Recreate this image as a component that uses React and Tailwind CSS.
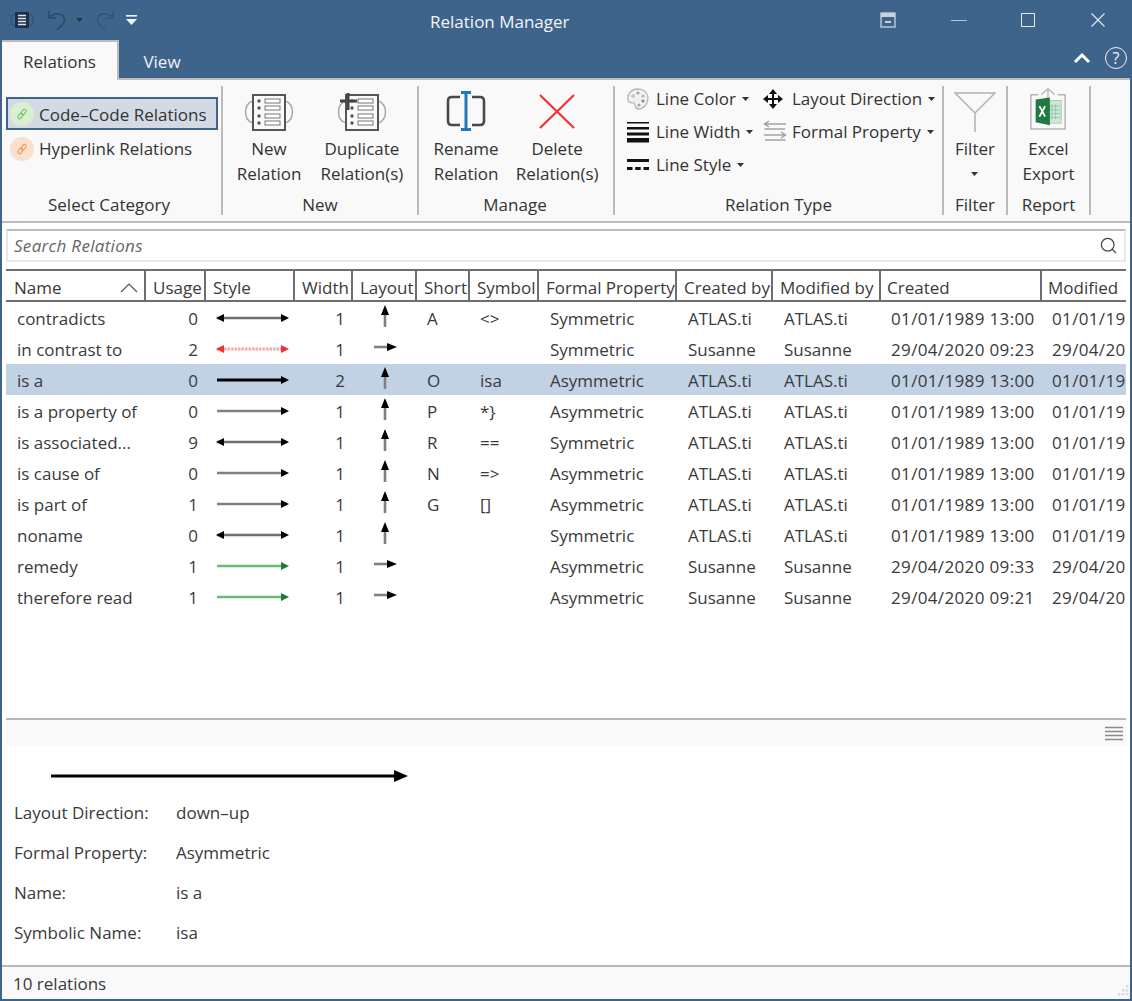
import { Search } from 'lucide-react';

const columns = [
  { label: 'Name', w: 140 },
  { label: 'Usage', w: 60 },
  { label: 'Style', w: 89 },
  { label: 'Width', w: 58 },
  { label: 'Layout', w: 64 },
  { label: 'Short', w: 53 },
  { label: 'Symbol', w: 69 },
  { label: 'Formal Property', w: 138 },
  { label: 'Created by', w: 96 },
  { label: 'Modified by', w: 108 },
  { label: 'Created', w: 161 },
  { label: 'Modified', w: 85 },
];

const ATLAS = 'ATLAS.ti';
const SYSDATE = '01/01/1989 13:00';

const rows = [
  { name: 'contradicts', usage: 0, style: 'both', width: 1, layout: 'up', short: 'A', symbol: '<>', prop: 'Symmetric', by: ATLAS, created: SYSDATE },
  { name: 'in contrast to', usage: 2, style: 'red', width: 1, layout: 'right', short: '', symbol: '', prop: 'Symmetric', by: 'Susanne', created: '29/04/2020 09:23' },
  { name: 'is a', usage: 0, style: 'thick', width: 2, layout: 'up', short: 'O', symbol: 'isa', prop: 'Asymmetric', by: ATLAS, created: SYSDATE, selected: true },
  { name: 'is a property of', usage: 0, style: 'right', width: 1, layout: 'up', short: 'P', symbol: '*}', prop: 'Asymmetric', by: ATLAS, created: SYSDATE },
  { name: 'is associated...', usage: 9, style: 'both', width: 1, layout: 'up', short: 'R', symbol: '==', prop: 'Symmetric', by: ATLAS, created: SYSDATE },
  { name: 'is cause of', usage: 0, style: 'right', width: 1, layout: 'up', short: 'N', symbol: '=>', prop: 'Asymmetric', by: ATLAS, created: SYSDATE },
  { name: 'is part of', usage: 1, style: 'right', width: 1, layout: 'up', short: 'G', symbol: '[]', prop: 'Asymmetric', by: ATLAS, created: SYSDATE },
  { name: 'noname', usage: 0, style: 'both', width: 1, layout: 'up', short: '', symbol: '', prop: 'Symmetric', by: ATLAS, created: SYSDATE },
  { name: 'remedy', usage: 1, style: 'green', width: 1, layout: 'right', short: '', symbol: '', prop: 'Asymmetric', by: 'Susanne', created: '29/04/2020 09:33' },
  { name: 'therefore read', usage: 1, style: 'green', width: 1, layout: 'right', short: '', symbol: '', prop: 'Asymmetric', by: 'Susanne', created: '29/04/2020 09:21' },
];

const details = [
  ['Layout Direction:', 'down\u2013up'],
  ['Formal Property:', 'Asymmetric'],
  ['Name:', 'is a'],
  ['Symbolic Name:', 'isa'],
];

function StyleArrow({ kind }) {
  const looks = {
    both: { line: '#707070', head: '#000', sw: 2.6, left: true },
    right: { line: '#808080', head: '#000', sw: 2.6 },
    red: { line: '#f6a6a6', head: '#ee3333', sw: 3, left: true, dash: '2.5 1' },
    thick: { line: '#000', head: '#000', sw: 3 },
    green: { line: '#68bb7a', head: '#1d7a3a', sw: 2.6 },
  };
  const l = looks[kind];
  return (
    <svg width="74" height="10" viewBox="0 0 74 10">
      <line x1="1" y1="5" x2="70" y2="5" stroke={l.line} strokeWidth={l.sw} strokeDasharray={l.dash} />
      {l.left && <path d="M0 5 L8 1 V9 Z" fill={l.head} />}
      <path d="M73 5 L65 1 V9 Z" fill={l.head} />
    </svg>
  );
}

function LayoutArrow({ dir }) {
  if (dir === 'up') {
    return (
      <svg width="10" height="22" viewBox="0 0 10 22">
        <line x1="5" y1="6" x2="5" y2="22" stroke="#808080" strokeWidth="2.6" />
        <path d="M5 0 L9 10 H1 Z" fill="#000" />
      </svg>
    );
  }
  return (
    <svg width="23" height="10" viewBox="0 0 23 10">
      <line x1="0" y1="5" x2="16" y2="5" stroke="#808080" strokeWidth="2.6" />
      <path d="M23 5 L13 1 V9 Z" fill="#000" />
    </svg>
  );
}

function Caret({ className = '' }) {
  return (
    <svg width="7" height="4" viewBox="0 0 7 4" className={className}>
      <path d="M0 0 H7 L3.5 4 Z" fill="#333" />
    </svg>
  );
}

function LinkBadge({ bg, color }) {
  return (
    <span className={`flex h-6 w-6 shrink-0 items-center justify-center rounded-full ${bg}`}>
      <svg width="12" height="12" viewBox="0 0 14 14" fill="none" stroke={color} strokeWidth="1.2">
        <rect x="7" y="1.2" width="4" height="7" rx="2" transform="rotate(35 9 4.7)" />
        <rect x="3" y="5.8" width="4" height="7" rx="2" transform="rotate(35 5 9.3)" />
      </svg>
    </span>
  );
}

function DocIcon({ plus }) {
  return (
    <svg width="50" height="42" viewBox="0 0 50 42" className="mt-[6px]" fill="none">
      <path d="M9 8 C-1 10 -1 28 9 30" stroke="#a8a8a8" strokeWidth="1.5" />
      <path d="M41 8 C51 10 51 28 41 30" stroke="#a8a8a8" strokeWidth="1.5" />
      <rect x="9" y="2" width="32" height="35" fill="#f9f9f9" stroke="#555" strokeWidth="2" />
      {[8, 15, 23, 30].map((y) => (
        <g key={y}>
          <circle cx="15" cy={y} r="1.7" fill="#555" />
          <rect x="21" y={y - 2} width="15" height="4" fill="#fff" stroke="#777" />
        </g>
      ))}
      {plus && <path d="M11 0 V17 M3 8 H20" stroke="#444" strokeWidth="3" />}
    </svg>
  );
}

function PaletteIcon() {
  return (
    <svg width="22" height="22" viewBox="0 0 22 22">
      <path d="M11 1 C4 1 0 6 1 12 C2 16 5 14 7 15 C9 16 7 20 11 21 C17 21 21 16 21 10 C21 5 17 1 11 1 Z" fill="#f1f1f1" stroke="#b5b5b5" strokeWidth="1.3" />
      <circle cx="6" cy="8" r="2" fill="#c9c9c9" />
      <circle cx="11" cy="5" r="1.6" fill="#a5a5a5" />
      <circle cx="16" cy="8" r="1.6" fill="#b8b8b8" />
      <circle cx="16" cy="13" r="1.6" fill="#8f8f8f" />
      <circle cx="12" cy="17" r="1.6" fill="#a5a5a5" />
    </svg>
  );
}

function WidthIcon() {
  return (
    <svg width="22" height="22" viewBox="0 0 22 22" fill="#111">
      <rect y="1" width="22" height="1.5" />
      <rect y="6" width="22" height="2.5" />
      <rect y="11.5" width="22" height="3" />
      <rect y="17" width="22" height="4.5" />
    </svg>
  );
}

function LineStyleIcon() {
  return (
    <svg width="22" height="14" viewBox="0 0 22 14" fill="#111">
      <rect y="1" width="22" height="3" />
      <rect y="9" width="5.5" height="3" />
      <rect x="8.2" y="9" width="5.5" height="3" />
      <rect x="16.5" y="9" width="5.5" height="3" />
    </svg>
  );
}

function MoveIcon() {
  return (
    <svg width="20" height="20" viewBox="0 0 20 20" fill="#111">
      <rect x="9" y="3" width="2" height="14" />
      <rect x="3" y="9" width="14" height="2" />
      <path d="M10 0 L14 5 H6 Z M10 20 L14 15 H6 Z M0 10 L5 6 V14 Z M20 10 L15 6 V14 Z" />
    </svg>
  );
}

function FormalIcon() {
  return (
    <svg width="24" height="24" viewBox="0 0 24 24" fill="none" stroke="#a3a3a3" strokeWidth="1.5">
      <path d="M23 4 H2 M6 1 L1.5 4 L6 7 M1.5 9 H22" />
      <path d="M1 15 H22 M18 12 L22.5 15 L18 18 M22.5 20 H2" />
    </svg>
  );
}

function ExcelIcon() {
  return (
    <svg width="38" height="44" viewBox="0 0 40 46" className="mb-[4px]" fill="none">
      <path d="M10 8 H2 V44 H38 V8 H30" stroke="#b5b5b5" strokeWidth="1.6" />
      <path d="M20 18 V2 M13 8 L20 1.5 L27 8" stroke="#b5b5b5" strokeWidth="1.4" />
      <rect x="20" y="14" width="14" height="24" fill="#cfe6d6" stroke="#a8d0b5" />
      <path d="M24 18 V34 M28 18 V34 M21 20 H33 M21 24 H33 M21 28 H33 M21 32 H33" stroke="#8cc09c" strokeWidth="0.8" />
      <path d="M7 13 L22 11 V40 L7 37 Z" fill="#1f7a43" />
      <path d="M11 20 L17 31 M17 20 L11 31" stroke="#fff" strokeWidth="2" />
    </svg>
  );
}

function BigButton({ icon, lines, caret, className = '' }) {
  return (
    <div className={`flex flex-col items-center ${className}`}>
      <div className="flex h-[50px] items-center justify-center">{icon}</div>
      <div className="text-center leading-[25px]">
        <div>{lines[0]}</div>
        {caret ? (
          <div className="flex h-[25px] items-center justify-center"><Caret /></div>
        ) : (
          <div>{lines[1]}</div>
        )}
      </div>
    </div>
  );
}

function SmallButton({ icon, label, className = '' }) {
  return (
    <div className={`flex h-[33px] items-center ${className}`}>
      <span className="flex w-[29px] shrink-0 items-center">{icon}</span>
      <span className="whitespace-nowrap">{label}</span>
      <Caret className="ml-[6px]" />
    </div>
  );
}

function Group({ width, label, children, labelClass = '' }) {
  return (
    <div className={`flex h-[129px] flex-col border-r-2 border-[#bcbcbc] ${width}`}>
      <div className="flex h-[106px] shrink-0 justify-center">{children}</div>
      <div className={`mt-[1px] shrink-0 text-center leading-[24px] ${labelClass}`}>{label}</div>
    </div>
  );
}

function Ribbon() {
  return (
    <div className="flex h-[145px] border-y-2 border-[#bcbcbc] bg-[#f9f9f9] pt-[6px] text-[#333]">
      <Group width="w-[221px]" label="Select Category" labelClass="pr-[5px]">
        <div className="flex w-full flex-col gap-[2px] pl-[4px] pr-[3px] pt-[11px]">
          <div className="flex h-[33px] items-center gap-[5px] whitespace-nowrap border-2 border-[#3f648c] bg-[#d3dae3] pl-[2px]">
            <LinkBadge bg="bg-[#d8efd0]" color="#6fbf6f" />
            <span className="pt-[2px]">Code–Code Relations</span>
          </div>
          <div className="flex h-[33px] items-center gap-[5px] whitespace-nowrap pl-[4px]">
            <LinkBadge bg="bg-[#fbe0cc]" color="#f0914f" />
            <span>Hyperlink Relations</span>
          </div>
        </div>
      </Group>
      <Group width="w-[196px]" label="New">
        <div className="flex gap-[19px]">
          <BigButton icon={<DocIcon />} lines={['New', 'Relation']} />
          <BigButton icon={<DocIcon plus />} lines={['Duplicate', 'Relation(s)']} />
        </div>
      </Group>
      <Group width="w-[196px]" label="Manage" labelClass="pr-[2px]">
        <div className="flex gap-[17px]">
          <BigButton
            icon={
              <svg width="40" height="40" viewBox="0 0 40 40" fill="none">
                <path d="M14 6 H6 Q2 6 2 10 V30 Q2 34 6 34 H14 M26 6 H34 Q38 6 38 10 V30 Q38 34 34 34 H26" stroke="#4b4650" strokeWidth="2.6" />
                <path d="M20 1 V39 M15 1.5 H25 M15 38.5 H25" stroke="#2378bd" strokeWidth="3" />
              </svg>
            }
            lines={['Rename', 'Relation']}
          />
          <BigButton
            icon={
              <svg width="36" height="35" viewBox="0 0 36 35" fill="none" stroke="#ee3333" strokeWidth="2.2">
                <path d="M1 1 L35 34 M35 1 L1 34" />
              </svg>
            }
            lines={['Delete', 'Relation(s)']}
          />
        </div>
      </Group>
      <Group width="w-[329px]" label="Relation Type">
        <div className="-mt-[4px] flex w-full pl-[12px]">
          <div className="flex w-[136px] flex-col">
            <SmallButton icon={<PaletteIcon />} label="Line Color" />
            <SmallButton icon={<WidthIcon />} label="Line Width" />
            <SmallButton icon={<LineStyleIcon />} label="Line Style" />
          </div>
          <div className="flex flex-col">
            <SmallButton icon={<MoveIcon />} label="Layout Direction" />
            <SmallButton icon={<FormalIcon />} label="Formal Property" />
          </div>
        </div>
      </Group>
      <Group width="w-[64px]" label="Filter">
        <BigButton
          icon={
            <svg width="42" height="40" viewBox="0 0 42 40" className="mt-[2px]" fill="none" stroke="#b0b0b0" strokeWidth="1.5">
              <path d="M1 1 H41 L21 21 Z M21 21 V40" />
            </svg>
          }
          lines={['Filter']}
          caret
        />
      </Group>
      <Group width="w-[83px]" label="Report">
        <BigButton icon={<ExcelIcon />} lines={['Excel', 'Export']} />
      </Group>
    </div>
  );
}

function RelationTable() {
  return (
    <div className="h-[449px] w-[1120px] overflow-hidden">
      <div className="flex h-[33px] border-y-2 border-[#6e6e6e]">
        {columns.map((c, i) => (
          <div
            key={c.label}
            style={{ width: c.w }}
            className={`flex shrink-0 items-end overflow-hidden whitespace-nowrap pb-[1px] leading-[22px] ${i === 0 ? 'pl-[8px]' : i >= 10 ? 'pl-[6px]' : 'pl-[7px]'} ${i < columns.length - 1 ? 'border-r-2 border-[#6e6e6e]' : ''}`}
          >
            <span>{c.label}</span>
            {i === 0 && (
              <svg width="18" height="10" viewBox="0 0 18 10" className="mb-[6px] ml-auto mr-[6px]" fill="none" stroke="#555" strokeWidth="1.2">
                <path d="M1 9 L9 1 L17 9" />
              </svg>
            )}
          </div>
        ))}
      </div>
      {rows.map((r) => (
        <div key={r.name} className={`flex h-[31px] items-center whitespace-nowrap pt-[2px] ${r.selected ? 'bg-[#c1d2e5]' : ''}`}>
          <div className="w-[139px] shrink-0 pl-[11px]">{r.name}</div>
          <div className="w-[53px] shrink-0 text-right">{r.usage}</div>
          <div className="mb-[2px] flex w-[96px] shrink-0 justify-start pl-[18px]"><StyleArrow kind={r.style} /></div>
          <div className="w-[51px] shrink-0 text-right">{r.width}</div>
          <div className="flex h-[29px] w-[70px] shrink-0 items-center justify-center pb-[5px] pl-[10px]"><LayoutArrow dir={r.layout} /></div>
          <div className="w-[54px] shrink-0 pl-[12px]">{r.short}</div>
          <div className="w-[69px] shrink-0 pl-[11px]">{r.symbol}</div>
          <div className="w-[138px] shrink-0 pl-[12px]">{r.prop}</div>
          <div className="w-[96px] shrink-0 pl-[12px]">{r.by}</div>
          <div className="w-[108px] shrink-0 pl-[12px]">{r.by}</div>
          <div className="w-[161px] shrink-0 pl-[11px] tracking-[0.35px]">{r.created}</div>
          <div className="w-[85px] shrink-0 overflow-hidden pl-[11px] tracking-[0.35px]">{r.created}</div>
        </div>
      ))}
    </div>
  );
}

export default function App() {
  return (
    <div className="flex h-[1001px] w-[1132px] flex-col overflow-hidden border-x-2 border-b-2 border-[#3f648c] bg-[#3f648c] text-[17px] text-[#3a3a3a] [font-family:'Open_Sans','Noto_Sans',sans-serif]">
      <div className="flex h-[40px] shrink-0 items-center text-[#f2f5f8]">
        <div className="flex w-[400px] items-center">
          <svg width="24" height="20" viewBox="0 0 24 20" className="ml-[8px]" fill="none">
            <path d="M4 4 C0 6 0 14 4 16 M20 4 C24 6 24 14 20 16" stroke="#2f4a68" strokeWidth="1" />
            <rect x="5" y="2" width="14" height="16" rx="1" fill="#1f2f45" />
            <path d="M8 5.5 H16 M8 8.5 H16 M8 11.5 H16 M8 14.5 H16" stroke="#dfe5ec" strokeWidth="1.6" />
          </svg>
          <svg width="20" height="22" viewBox="0 0 20 22" className="ml-[13px]" fill="none" stroke="#2c4866" strokeWidth="1.6">
            <path d="M2 2 V9 H9 M2 9 C8 2 20 4 17 13 C16 16 12 19 10 21" />
          </svg>
          <Caret className="ml-[9px]" />
          <svg width="20" height="22" viewBox="0 0 20 22" className="ml-[12px]" fill="none" stroke="#355373" strokeWidth="1.6">
            <path d="M18 2 V9 H11 M18 9 C12 2 0 4 3 13 C4 16 8 19 10 21" />
          </svg>
          <svg width="11" height="10" viewBox="0 0 11 10" className="ml-[11px]" fill="#f2f5f8">
            <rect width="11" height="1.6" />
            <path d="M0 4 H11 L5.5 10 Z" />
          </svg>
        </div>
        <div className="ml-[28px] pt-[3px]">Relation Manager</div>
        <div className="ml-auto flex items-center pr-[25px]">
          <svg width="16" height="16" viewBox="0 0 16 16" fill="none">
            <rect x="1" y="1" width="14" height="14" stroke="#c9d3de" strokeWidth="1.3" />
            <rect x="1" y="1" width="14" height="4" fill="#c9d3de" />
            <rect x="5" y="9" width="6" height="2" fill="#c9d3de" />
          </svg>
          <span className="ml-[55px] h-[1px] w-[16px] bg-[#b9c6d4]" />
          <span className="ml-[54px] h-[14px] w-[14px] border border-[#e6ebf1]" />
          <svg width="14" height="14" viewBox="0 0 14 14" className="ml-[56px]" fill="none" stroke="#e6ebf1" strokeWidth="1.1">
            <path d="M0.5 0.5 L13.5 13.5 M13.5 0.5 L0.5 13.5" />
          </svg>
        </div>
      </div>
      <div className="-mb-[2px] flex h-[40px] shrink-0 text-[#eef2f6]">
        <div className="z-10 flex w-[117px] items-center justify-center border-r-2 border-t-2 border-[#bcbcbc] bg-[#f9f9f9] pt-[2px] text-[#333]">Relations</div>
        <div className="flex w-[86px] items-center justify-center pt-[4px]">View</div>
        <div className="ml-auto flex items-center pb-[4px] pr-[3px]">
          <svg width="18" height="12" viewBox="0 0 18 12" fill="none" stroke="#fff" strokeWidth="3">
            <path d="M2 10 L9 3 L16 10" />
          </svg>
          <span className="ml-[14px] flex h-[22px] w-[22px] items-center justify-center rounded-full border border-[#eef2f6] text-[16px]">?</span>
        </div>
      </div>
      <Ribbon />
      <div className="flex min-h-0 flex-1 flex-col bg-white px-[4px]">
        <div className="mt-[6px] flex h-[33px] shrink-0 items-center justify-between border-2 border-[#e4e8ed] border-t-[#b9bdc2] pl-[6px] pr-[6px]">
          <span className="pt-[1px] italic tracking-[0.3px] text-[#666]">Search Relations</span>
          <Search size={19} strokeWidth={1.6} color="#444" />
        </div>
        <div className="mt-[7px] shrink-0"><RelationTable /></div>
        <div className="h-[2px] shrink-0 bg-[#b7b7b7]" />
        <div className="flex h-[26px] shrink-0 items-center justify-end bg-[#f9f9f9] pr-[3px]">
          <svg width="18" height="15" viewBox="0 0 18 15" stroke="#8a8a8a" strokeWidth="1.5">
            <path d="M0 1.5 H18 M0 5.5 H18 M0 9.5 H18 M0 13.5 H18" />
          </svg>
        </div>
        <div className="mt-[23px] pl-[45px]">
          <svg width="358" height="14" viewBox="0 0 358 14">
            <line x1="0" y1="7" x2="348" y2="7" stroke="#000" strokeWidth="3" />
            <path d="M357 7 L343 1 V13 Z" fill="#000" />
          </svg>
        </div>
        <div className="mt-[10px] flex flex-col pl-[8px]">
          {details.map(([k, v]) => (
            <div key={k} className="flex h-[40px] items-center">
              <span className="w-[162px] shrink-0">{k}</span>
              <span>{v}</span>
            </div>
          ))}
        </div>
      </div>
      <div className="flex h-[34px] shrink-0 items-center justify-between border-t-2 border-[#b7b7b7] bg-[#f9f9f9] pl-[11px] pt-[1px]">
        <span>10 relations</span>
        <svg width="16" height="16" viewBox="0 0 16 16" fill="#d3dce6" className="mt-[14px]">
          <rect x="12" y="2" width="2.5" height="2.5" />
          <rect x="8" y="6" width="2.5" height="2.5" />
          <rect x="12" y="6" width="2.5" height="2.5" />
          <rect x="4" y="10" width="2.5" height="2.5" />
          <rect x="8" y="10" width="2.5" height="2.5" />
          <rect x="12" y="10" width="2.5" height="2.5" />
        </svg>
      </div>
    </div>
  );
}
